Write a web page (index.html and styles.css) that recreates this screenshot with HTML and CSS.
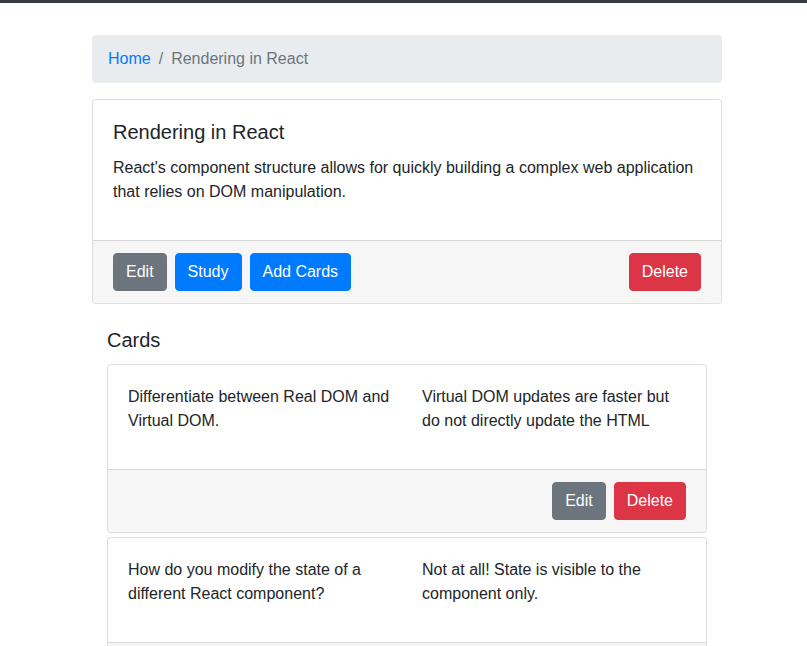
FILE: index.html
```html
<!DOCTYPE html>
<html lang="en">
<head>
<meta charset="utf-8">
<title>Rendering in React</title>
<link rel="stylesheet" href="styles.css">
</head>
<body>
<div class="topbar"></div>
<div class="container">
  <nav class="breadcrumb">
    <a class="crumb-link" href="#">Home</a>
    <span class="crumb-sep">/</span>
    <span class="crumb-active">Rendering in React</span>
  </nav>

  <div class="card deck-card">
    <div class="card-body">
      <h5 class="card-title">Rendering in React</h5>
      <p class="card-text">React's component structure allows for quickly building a complex web application that relies on DOM manipulation.</p>
    </div>
    <div class="card-footer">
      <div class="btn-group-left">
        <button class="btn btn-secondary">Edit</button>
        <button class="btn btn-primary">Study</button>
        <button class="btn btn-primary">Add Cards</button>
      </div>
      <button class="btn btn-danger">Delete</button>
    </div>
  </div>

  <section class="cards-section">
    <h4 class="section-title">Cards</h4>

    <div class="card item-card">
      <div class="card-body">
        <div class="row">
          <p class="col">Differentiate between Real DOM and Virtual DOM.</p>
          <p class="col">Virtual DOM updates are faster but do not directly update the HTML</p>
        </div>
      </div>
      <div class="card-footer footer-end">
        <button class="btn btn-secondary">Edit</button>
        <button class="btn btn-danger">Delete</button>
      </div>
    </div>

    <div class="card item-card">
      <div class="card-body">
        <div class="row">
          <p class="col">How do you modify the state of a different React component?</p>
          <p class="col">Not at all! State is visible to the component only.</p>
        </div>
      </div>
      <div class="card-footer footer-end">
        <button class="btn btn-secondary">Edit</button>
        <button class="btn btn-danger">Delete</button>
      </div>
    </div>
  </section>
</div>
</body>
</html>
```

FILE: styles.css
```css
* { box-sizing: border-box; }
html, body { margin: 0; padding: 0; }
body {
  font-family: "Liberation Sans", Arial, sans-serif;
  font-size: 16px;
  line-height: 24px;
  color: #212529;
  background: #fff;
}
.topbar { height: 3px; background: #343a40; }
.container { width: 630px; margin: 32px 0 0 92px; }

.breadcrumb {
  display: flex;
  align-items: center;
  padding: 12px 16px;
  background: #e9ecef;
  border-radius: 4px;
  margin-bottom: 16px;
}
.crumb-link { color: #007bff; text-decoration: none; }
.crumb-sep { color: #6c757d; padding: 0 8px; }
.crumb-active { color: #6c757d; }

.card {
  border: 1px solid rgba(0,0,0,.125);
  border-radius: 4px;
  background: #fff;
  overflow: hidden;
}
.card-body { padding: 20px; }
.card-title { font-size: 20px; font-weight: 500; line-height: 24px; margin: 0 0 12px; }
.card-text { margin: 0 0 16px; }
.card-footer {
  display: flex;
  justify-content: space-between;
  align-items: center;
  padding: 12px 20px;
  background: #f6f6f6;
  border-top: 1px solid rgba(0,0,0,.125);
}
.footer-end { justify-content: flex-end; gap: 8px; }
.btn-group-left { display: flex; gap: 8px; }

.btn {
  font-family: inherit;
  font-size: 16px;
  line-height: 24px;
  padding: 6px 12px;
  border: 1px solid transparent;
  border-radius: 4px;
  color: #fff;
  cursor: pointer;
}
.btn-secondary { background: #6c757d; border-color: #6c757d; }
.btn-primary { background: #007bff; border-color: #007bff; }
.btn-danger { background: #dc3545; border-color: #dc3545; }

.cards-section { padding: 0 15px; margin-top: 24px; }
.section-title { font-size: 20px; font-weight: 500; line-height: 24px; margin: 0 0 12px; }
.item-card { margin-bottom: 4px; }
.row { display: flex; margin: 0 -15px; }
.col { flex: 1 1 0; padding: 0 15px; margin: 0 0 16px; }
```
